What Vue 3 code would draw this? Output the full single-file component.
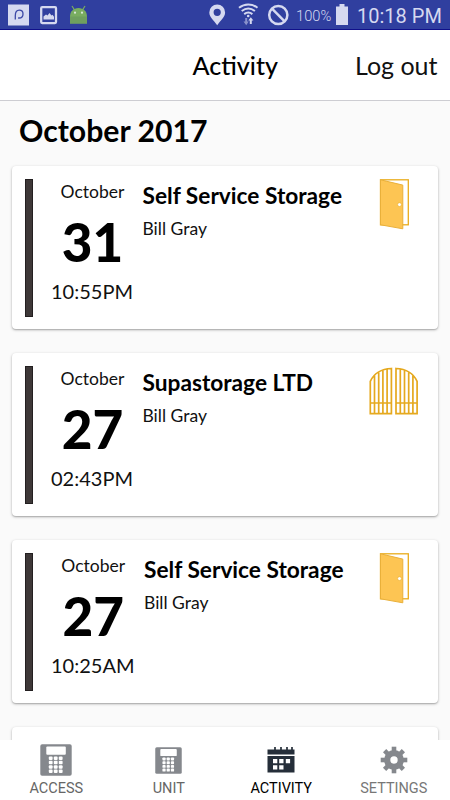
<script setup>
const entries = [
  { month: 'October', day: '31', time: '10:55PM', place: 'Self Service Storage', user: 'Bill Gray', kind: 'door' },
  { month: 'October', day: '27', time: '02:43PM', place: 'Supastorage LTD', user: 'Bill Gray', kind: 'gate' },
  { month: 'October', day: '27', time: '10:25AM', place: 'Self Service Storage', user: 'Bill Gray', kind: 'door' },
]
const keyCols = [9.6, 14.6, 19.6]
const keyRows = [13, 17.4, 21.8, 26.2]
const teeth = [0, 45, 90, 135, 180, 225, 270, 315]
const leaves = ['', 'matrix(-1 0 0 1 51.400 0)']
const tabs = [
  { label: 'ACCESS', icon: 'keypad', size: 32 },
  { label: 'UNIT', icon: 'keypad', size: 27 },
  { label: 'ACTIVITY', icon: 'calendar', size: 28, active: true },
  { label: 'SETTINGS', icon: 'gear', size: 28, muted: true },
]
</script>

<template>
  <div class="screen">
    <header class="status">
      <svg class="notes" width="90" height="30" viewBox="0 0 90 30">
        <rect x="8" y="4.5" width="21" height="21" fill="#d5d9f0" />
        <path d="M15.3 19.5v-3.8c0-3.400 1.500-5.600 4-5.600 2.300 0 3.700 1.500 3.700 3.800s-1.600 4.100-3.900 4.100h-1" fill="none" stroke="#3c48a6" stroke-width="1.300" />
        <rect x="41.200" y="7.200" width="14.800" height="15.900" rx="1" fill="none" stroke="#d5d9f0" stroke-width="2.300" />
        <path d="M43.500 19.500v-3l2.500-2 1.500 1 2-2.500 2 2.500 1-.8 1.500 2v2.800z" fill="#d5d9f0" />
        <path d="M70 23.500v-7c0-5 3.500-8.500 8.500-8.500s8.500 3.500 8.500 8.500v7z" fill="#79ad60" />
        <path d="M70 16.500h17v7H70z" fill="#6fa05e" />
        <path d="M74.500 10l-2.500-4M82.500 10l2.500-4" stroke="#79ad60" stroke-width="1.200" />
        <circle cx="75" cy="12.700" r="1.100" fill="#dbe8dc" /><circle cx="82" cy="12.700" r="1.100" fill="#dbe8dc" />
      </svg>
      <svg class="signals" width="90" height="30" viewBox="0 0 90 30">
        <path fill-rule="evenodd" d="M10.200 4.500a7.900 7.900 0 0 0-7.900 7.900c0 4.800 4.500 7.500 7.900 12.800 3.400-5.300 7.900-8 7.900-12.800a7.900 7.900 0 0 0-7.900-7.900zm0 4.200a3.600 3.600 0 1 1 0 7.200 3.600 3.600 0 0 1 0-7.200z" fill="#d5d9f0" />
        <path d="M32 7.800c5.500-4.400 13-4.400 18.500 0M34.700 11c4.200-3.200 9-3.200 13.200 0M37.200 14.100c2.600-2 5.600-2 8.200 0" fill="none" stroke="#d5d9f0" stroke-width="2" />
        <circle cx="41.200" cy="16" r="1.300" fill="#d5d9f0" />
        <path d="M38.200 18h2v3.500h1.500l-2.500 3.700-2.700-3.700h1.700z" fill="#8991cb" />
        <path d="M44.800 24h-2v-3.400h-1.500l2.500-3.300 2.600 3.300h-1.600z" fill="#d5d9f0" />
        <g fill="none" stroke="#d5d9f0" stroke-width="2.500"><circle cx="71.300" cy="15" r="9.100" /><path d="M65 8.700l12.600 12.600" /></g>
      </svg>
      <span class="percent">100%</span>
      <svg class="battery" width="12" height="21" viewBox="0 0 12 21"><path d="M3.500 0h5v2.500H12V21H0V2.500h3.500z" fill="#d5d9f0" /></svg>
      <span class="clock">10:18 PM</span>
    </header>

    <nav class="bar">
      <span></span>
      <span class="title">Activity</span>
      <span class="logout">Log out</span>
    </nav>

    <main class="content">
      <h1>October 2017</h1>
      <div class="list">
        <article v-for="(e, i) in entries" :key="i" class="card">
          <div class="stripe"></div>
          <div class="date">
            <span class="month">{{ e.month }}</span>
            <span class="day">{{ e.day }}</span>
            <span class="time">{{ e.time }}</span>
          </div>
          <div class="info">
            <div class="place">{{ e.place }}</div>
            <div class="user">{{ e.user }}</div>
          </div>
          <svg v-if="e.kind === 'door'" class="kind" width="52" height="52" viewBox="0 0 52 52">
            <rect x="12.500" y=".8" width="27.800" height="45" fill="#fff" stroke="#e9ac1c" stroke-width="1.300" />
            <path d="M12.500 .8l22.300 5.300v43.700l-22.300-4z" fill="#fdc553" stroke="#e9b03a" stroke-width="1" />
            <circle cx="31.500" cy="25.600" r="1.900" fill="#fff" stroke="#e5a81c" stroke-width=".5" />
          </svg>
          <svg v-else class="kind" width="52" height="52" viewBox="0 0 52 52">
            <g v-for="m in leaves" :key="m" fill="none" stroke="#e5a91f" stroke-width="1.700" :transform="m">
              <path d="M2.300 47.700V15.300C5.900 7.600 13 2.900 23.400 2.500v45.200zM2.300 37h21.100M6.500 47.500V9.800M10.700 47.500V6.400M14.900 47.500V4.300M19.100 47.500V3.100" />
            </g>
          </svg>
        </article>
        <article class="card"><div class="stripe"></div></article>
      </div>
    </main>

    <footer class="tabs">
      <div v-for="t in tabs" :key="t.label" class="tab" :class="{ active: t.active, muted: t.muted }">
        <div class="glyph">
          <svg v-if="t.icon === 'keypad'" :width="t.size" :height="t.size" viewBox="0 0 32 32">
            <rect x=".3" y=".3" width="31.400" height="31.400" rx="1.800" fill="#85888d" />
            <rect x="6.300" y="2.500" width="19.500" height="8.200" rx="1" fill="#fff" />
            <template v-for="y in keyRows" :key="y">
              <rect v-for="x in keyCols" :key="x" :x="x - 0.8" :y="y - 0.6" width="3.800" height="3.500" rx="1" fill="#fff" />
            </template>
          </svg>
          <svg v-else-if="t.icon === 'calendar'" width="28" height="28" viewBox="0 0 28 28">
            <path d="M.5 3.500h27v5H.5zM.5 10h27v16.500H.5z" fill="#252e39" />
            <path d="M8 1v3M14 1v3M20 1v3M25 1v3" stroke="#252e39" stroke-width="1.700" />
            <path d="M6 13h4.300v4.300H6zM12.200 13h4.300v4.300h-4.300zM18.800 13h4.300v4.300h-4.300zM6 19.300h4.300v4.300H6zM12.200 19.300h4.300v4.300h-4.300z" fill="#fff" />
          </svg>
          <svg v-else width="28" height="28" viewBox="-14 -14 28 28">
            <rect v-for="a in teeth" :key="a" x="-2.300" y="-13.300" width="4.600" height="7" fill="#85888d" :transform="`rotate(${a})`" />
            <circle r="6.800" fill="none" stroke="#85888d" stroke-width="6.200" />
          </svg>
        </div>
        <span>{{ t.label }}</span>
      </div>
    </footer>
  </div>
</template>

<style>
body { margin: 0; overflow: hidden; }
</style>

<style scoped>
* { box-sizing: border-box; }
.screen {
  width: 450px; height: 800px; overflow: hidden;
  display: flex; flex-direction: column;
  background: #fafafa; color: #000;
  font-family: Lato, sans-serif;
}
.status {
  height: 30px; flex: none; display: flex; align-items: center;
  background: #303f9f; border-bottom: 1px solid #10108a;
  color: #d5d9f0; font-family: Roboto, sans-serif; white-space: nowrap;
}
.notes { flex: none; }
.signals { flex: none; margin-left: 117px; }
.percent { font-size: 14.700px; margin-left: -1px; width: 40px; padding-top: 2px; font-weight: 300; }
.battery { flex: none; }
.clock { font-size: 20px; margin-left: 9px; padding-top: 2px; }
.bar {
  height: 71px; flex: none; background: #fff; border-bottom: 1px solid #cdcdd2;
  display: grid; grid-template-columns: 1fr auto 1fr; align-items: center;
  padding: 1px 12.500px 1px 33px; font-size: 25px;
}
.title { font-weight: 500; }
.logout { text-align: right; color: #111; }
.content { flex: 1; min-height: 0; overflow: hidden; }
h1 { margin: 0; padding: 11px 0 0 19px; height: 65px; font-size: 30.200px; line-height: 37px; font-weight: 700; }
.list { display: flex; flex-direction: column; gap: 24px; padding: 0 12px; }
.card {
  height: 163px; flex: none; display: flex; padding: 12.500px 18.500px 12px 13px;
  background: #fff; border-radius: 4px;
  box-shadow: 0 1px 3px rgba(0, 0, 0, .28), 0 1px 1px rgba(0, 0, 0, .12);
}
.stripe { width: 7.500px; height: 138px; background: #3e3838; border: 1px solid #231f20; flex: none; }
.date { display: flex; flex-direction: column; align-items: center; margin-left: 18.500px; padding-top: 3px; }
.month { font-size: 17.500px; line-height: 20px; margin-left: 1px; color: #111; }
.day { font-size: 53px; line-height: 60px; font-weight: 900; margin: 10px 0 0 1px; }
.time { font-size: 20px; line-height: 24px; margin-top: 7px; color: #111; }
.info { margin-left: 9.500px; padding-top: 3px; flex: 1; white-space: nowrap; }
.place { font-size: 22.700px; line-height: 27px; font-weight: 700; }
.user { font-size: 17.500px; line-height: 20px; margin-top: 10.500px; color: #111; }
.kind { flex: none; }
.tabs { height: 60px; flex: none; display: grid; grid-template-columns: repeat(4, 1fr); background: #fff; }
.tab {
  display: flex; flex-direction: column; align-items: center;
  font-family: Roboto, sans-serif; font-size: 14.500px; line-height: 18px; color: #666;
}
.glyph { height: 40px; display: flex; align-items: center; justify-content: center; }
.glyph svg { display: block; }
.active { color: #000; }
.muted { color: #777; }
</style>
